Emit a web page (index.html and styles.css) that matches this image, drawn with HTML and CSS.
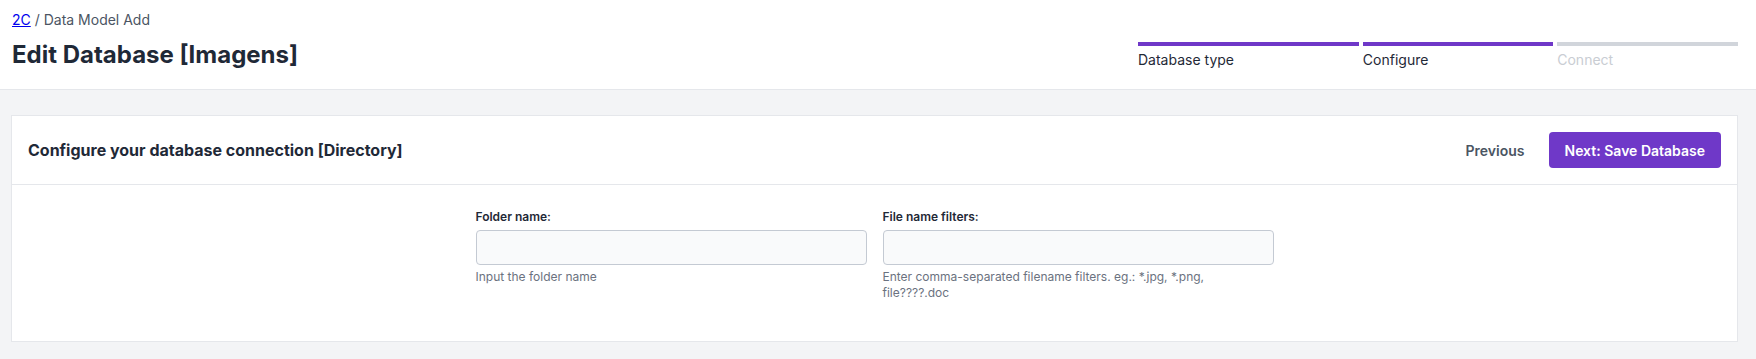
FILE: index.html
```html
<!DOCTYPE html>
<html lang="en">
<head>
    <meta charset="UTF-8">
    <meta name="viewport" content="width=device-width, initial-scale=1.0">
    <title>Edit Database - 2C</title>
    <link rel="stylesheet" href="styles.css">
</head>
<body>
    <header class="page-header">
        <div class="title-block">
            <div class="breadcrumb"><a href="#">2C</a> / Data Model Add</div>
            <h1>Edit Database [Imagens]</h1>
        </div>
        <ol class="steps">
            <li class="step done">Database type</li>
            <li class="step done">Configure</li>
            <li class="step">Connect</li>
        </ol>
    </header>

    <main class="content">
        <section class="card">
            <div class="card-header">
                <h2>Configure your database connection [Directory]</h2>
                <div class="actions">
                    <button type="button" class="btn-link">Previous</button>
                    <button type="submit" class="btn-primary">Next: Save Database</button>
                </div>
            </div>
            <form class="card-body">
                <div class="field">
                    <label for="folder">Folder name:</label>
                    <input type="text" id="folder">
                    <p class="help">Input the folder name</p>
                </div>
                <div class="field">
                    <label for="filters">File name filters:</label>
                    <input type="text" id="filters">
                    <p class="help">Enter comma-separated filename filters. eg.: *.jpg, *.png, file????.doc</p>
                </div>
            </form>
        </section>
    </main>
</body>
</html>
```

FILE: styles.css
```css
* {
    box-sizing: border-box;
    margin: 0;
    padding: 0;
}

body {
    font-family: 'Inter', 'Liberation Sans', sans-serif;
    background: #f3f4f6;
    color: #1f2937;
    min-height: 100vh;
}

.page-header {
    background: #fff;
    border-bottom: 1px solid #e5e7eb;
    height: 90px;
    padding: 10px 18px 0 12px;
    display: flex;
    justify-content: space-between;
    align-items: flex-start;
}

.breadcrumb {
    font-size: 14px;
    line-height: 20px;
    color: #4b5563;
}

.breadcrumb a {
    color: #0000ee;
}

h1 {
    margin-top: 9px;
    font-size: 24px;
    line-height: 32px;
    font-weight: 700;
    color: #1f2937;
}

.steps {
    list-style: none;
    display: flex;
    gap: 4px;
    width: 600px;
    margin-top: 32px;
}

.step {
    flex: 1 1 auto;
    border-top: 4px solid #d1d5db;
    padding-top: 4px;
    font-size: 14px;
    line-height: 20px;
    color: #c9cdd3;
}

.step.done {
    border-top-color: #6f38c8;
    color: #1f2937;
}

.content {
    padding: 25px 18px 18px 11px;
}

.card {
    background: #fff;
    border: 1px solid #e5e7eb;
}

.card-header {
    display: flex;
    justify-content: space-between;
    align-items: center;
    padding: 16px;
    border-bottom: 1px solid #e5e7eb;
}

h2 {
    font-size: 16px;
    font-weight: 700;
    color: #1f2937;
}

.actions {
    display: flex;
    align-items: center;
    gap: 24px;
}

.btn-link {
    background: none;
    border: none;
    font-family: inherit;
    font-size: 14px;
    font-weight: 600;
    color: #4b5563;
    cursor: pointer;
}

.btn-primary {
    height: 36px;
    padding: 0 16px;
    background: #6f38c8;
    color: #fff;
    font-family: inherit;
    font-size: 14px;
    font-weight: 600;
    border: none;
    border-radius: 4px;
    cursor: pointer;
}

.btn-primary:hover {
    background: #5f2db5;
}

.card-body {
    display: grid;
    grid-template-columns: repeat(2, 391px);
    gap: 16px;
    justify-content: center;
    padding: 24px 16px 40px;
}

.field label {
    display: block;
    font-size: 12px;
    line-height: 16px;
    font-weight: 600;
    color: #1f2937;
    margin-bottom: 5px;
}

.field input {
    display: block;
    width: 100%;
    height: 35px;
    padding: 0 10px;
    background: #f9fafb;
    border: 1px solid #c4cad3;
    border-radius: 4px;
    font-family: inherit;
    font-size: 14px;
}

.help {
    margin-top: 4px;
    font-size: 12px;
    line-height: 16px;
    color: #6b7280;
}
```
